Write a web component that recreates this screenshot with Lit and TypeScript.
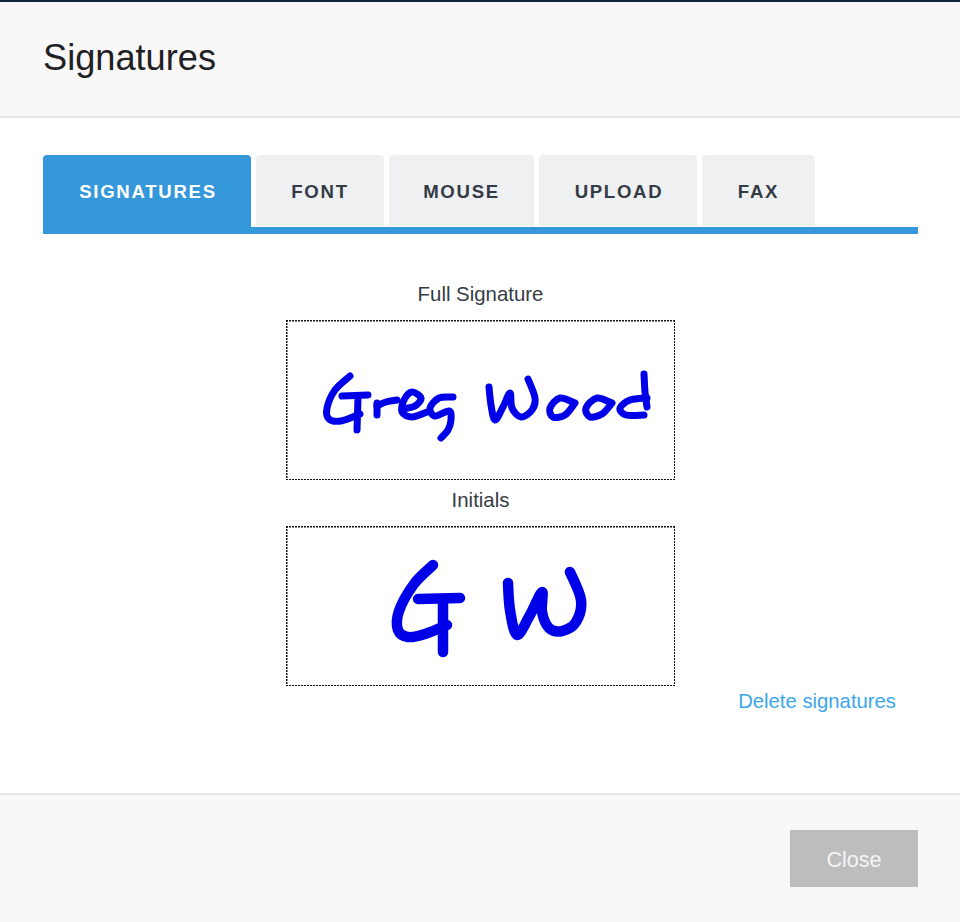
import { LitElement, html, css, svg } from "lit";
import { customElement } from "lit/decorators.js";

type Pt = [number, number];

// Smooth pen stroke through points (Catmull-Rom converted to cubic Bezier)
function stroke(points: Pt[]): string {
  let d = `M${points[0][0]} ${points[0][1]}`;
  for (let i = 0; i < points.length - 1; i++) {
    const p0 = points[Math.max(i - 1, 0)];
    const p1 = points[i];
    const p2 = points[i + 1];
    const p3 = points[Math.min(i + 2, points.length - 1)];
    const c1x = p1[0] + (p2[0] - p0[0]) / 6;
    const c1y = p1[1] + (p2[1] - p0[1]) / 6;
    const c2x = p2[0] - (p3[0] - p1[0]) / 6;
    const c2y = p2[1] - (p3[1] - p1[1]) / 6;
    d += ` C${c1x.toFixed(1)} ${c1y.toFixed(1)} ${c2x.toFixed(1)} ${c2y.toFixed(1)} ${p2[0]} ${p2[1]}`;
  }
  return d;
}

// Coordinates are page pixels; each viewBox starts at its box's corner.
const FULL: Pt[][] = [
  [[350, 376], [335, 390], [327, 408], [329, 419], [341, 421], [360, 414]],
  [[342, 396], [368, 395]],
  [[358, 398], [357, 430]],
  [[377, 415], [377, 403]],
  [[377, 406], [386, 402], [397, 400]],
  [[403, 409], [415, 406], [421, 398], [412, 392], [404, 400], [402, 412], [412, 417], [427, 412]],
  [[453, 397], [439, 398], [430, 408], [435, 416], [449, 411], [451, 420], [448, 430], [441, 438]],
  [[489, 387], [491, 405], [495, 420], [503, 407], [510, 393], [512, 408], [521, 417], [532, 410], [535, 398], [528, 379]],
  [[575, 403], [560, 398], [550, 408], [553, 417], [565, 415], [575, 403]],
  [[612, 403], [597, 398], [586, 408], [590, 417], [602, 414], [612, 403]],
  [[647, 398], [630, 400], [620, 408], [626, 415], [644, 415]],
  [[644, 374], [645, 392], [647, 407]],
];

const INITIALS: Pt[][] = [
  [[433, 565], [414, 584], [399, 611], [398, 630], [408, 637], [425, 634], [447, 625]],
  [[418, 599], [460, 598]],
  [[443, 602], [443, 652]],
  [[508, 583], [510, 610], [517, 635], [530, 615], [542, 592], [542, 612], [549, 628], [562, 631], [576, 622], [581, 600], [570, 572]],
];

@customElement("sig-pad")
class SigPad extends LitElement {
  static properties = { label: {}, x: { type: Number }, y: { type: Number }, sw: { type: Number } };
  declare label: string;
  declare x: number;
  declare y: number;
  declare sw: number;
  paths: Pt[][] = [];

  static styles = css`
    :host { display: flex; flex-direction: column; align-items: center; }
    .label { font-size: 20.4px; line-height: 24px; color: #363c44; margin-bottom: 14px; }
    .box {
      width: 389px;
      height: 160px;
      box-sizing: border-box;
      --dots-x: repeating-linear-gradient(90deg, #111 0 2px, transparent 2px 3px);
      --dots-y: repeating-linear-gradient(180deg, #111 0 2px, transparent 2px 3px);
      background:
        var(--dots-x) 0 0 / 100% 1.5px no-repeat,
        var(--dots-x) 0 100% / 100% 1.5px no-repeat,
        var(--dots-y) 0 0 / 1.5px 100% no-repeat,
        var(--dots-y) 100% 0 / 1.5px 100% no-repeat;
    }
    svg { display: block; width: 100%; height: 100%; }
    path { fill: none; stroke: #0000e8; stroke-linecap: round; stroke-linejoin: round; }
  `;

  render() {
    return html`
      <div class="label">${this.label}</div>
      <div class="box">
        <svg viewBox="${this.x} ${this.y} 389 160">
          ${this.paths.map((p) => svg`<path d=${stroke(p)} stroke-width=${this.sw}></path>`)}
        </svg>
      </div>
    `;
  }
}

@customElement("app-root")
export class AppRoot extends LitElement {
  static styles = css`
    :host {
      display: flex;
      flex-direction: column;
      height: 922px;
      font-family: "Liberation Sans", Arial, sans-serif;
      background: #fff;
      border-top: 2px solid #12283f;
      box-sizing: border-box;
    }
    header {
      height: 116px;
      box-sizing: border-box;
      display: flex;
      align-items: center;
      padding: 0 43px 2px;
      background: #f8f8f8;
      border-bottom: 2px solid #e6e6e6;
    }
    h1 { margin: 0; font-size: 36.2px; font-weight: 400; color: #1f2124; }
    main { flex: 1; padding: 37px 42px 0 43px; display: flex; flex-direction: column; }
    .tabs { display: flex; gap: 5px; height: 72px; border-bottom: 7px solid #3498db; }
    .tab {
      display: flex;
      align-items: center;
      justify-content: center;
      padding-top: 2px;
      box-sizing: border-box;
      margin-bottom: 1px;
      border-radius: 4px 4px 0 0;
      background: #eff0f2;
      color: #343b45;
      font-size: 18.6px;
      font-weight: 700;
      letter-spacing: 1.7px;
    }
    .tab.active { background: #3498db; color: #fff; margin-bottom: 0; padding-left: 2px; }
    .tab.upload { padding-left: 2px; }
    .pads { display: flex; flex-direction: column; align-items: center; margin-top: 48px; gap: 8px; }
    .del { align-self: flex-end; margin: 3px 22px 0 0; font-size: 20.3px; line-height: 24px; color: #3ba7e8; text-decoration: none; }
    footer {
      height: 129px;
      box-sizing: border-box;
      display: flex;
      justify-content: flex-end;
      padding: 35px 42px 0 0;
      background: #f8f8f8;
      border-top: 2px solid #e6e6e6;
    }
    button {
      width: 128px;
      height: 57px;
      border: 0;
      padding: 2px 0 0;
      background: #bdbdbd;
      color: #f4f4f4;
      font: 400 21.6px "Liberation Sans", Arial, sans-serif;
    }
  `;

  render() {
    const tabs: [string, number][] = [["SIGNATURES", 208], ["FONT", 128], ["MOUSE", 145], ["UPLOAD", 158], ["FAX", 113]];
    return html`
      <header><h1>Signatures</h1></header>
      <main>
        <div class="tabs">
          ${tabs.map(([t, w], i) => html`<div class="tab ${i === 0 ? "active" : ""} ${t === "UPLOAD" ? "upload" : ""}" style="width:${w}px">${t}</div>`)}
        </div>
        <div class="pads">
          <sig-pad label="Full Signature" .x=${286} .y=${320} .sw=${7} .paths=${FULL}></sig-pad>
          <sig-pad label="Initials" .x=${286} .y=${526} .sw=${10.5} .paths=${INITIALS}></sig-pad>
        </div>
        <a class="del" href="#">Delete signatures</a>
      </main>
      <footer><button>Close</button></footer>
    `;
  }
}
